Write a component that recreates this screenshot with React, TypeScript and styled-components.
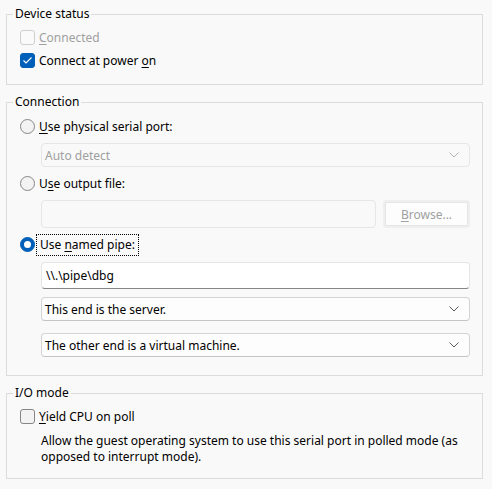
import React from 'react';
import styled, { createGlobalStyle } from 'styled-components';

const Global = createGlobalStyle`
  html, body {
    margin: 0;
    background: #f9f9f9;
  }
  body {
    font-family: "Noto Sans", "Liberation Sans", sans-serif;
    font-size: 12px;
    color: #000;
  }
`;

const Page = styled.div`
  display: flex;
  flex-direction: column;
  gap: 9px;
  padding: 6px 9px 0 6px;
  width: 477px;
`;

const Group = styled.fieldset<{ $pt?: number; $pb?: number }>`
  margin: 0;
  min-width: 0;
  border: 1px solid #dcdcdc;
  padding: ${(p) => p.$pt ?? 4}px 12px ${(p) => p.$pb ?? 12}px 13px;
  display: flex;
  flex-direction: column;
`;

const Legend = styled.legend`
  padding: 0 2px;
  margin-left: -7px;
  line-height: 16px;
  font-size: 12px;
`;

const Row = styled.label<{ $mt?: number; $disabled?: boolean }>`
  display: flex;
  align-items: center;
  gap: 4px;
  height: 23px;
  margin-top: ${(p) => p.$mt ?? 0}px;
  color: ${(p) => (p.$disabled ? '#a0a0a0' : '#000')};
  line-height: 16px;
`;

const Key = styled.span`
  text-decoration: underline;
  text-underline-offset: 2px;
`;

const Focus = styled.span`
  outline: 1px dotted #000;
  outline-offset: 2px;
  padding: 0 1px;
`;

const Box = styled.span<{ $checked?: boolean; $disabled?: boolean }>`
  width: 15px;
  height: 15px;
  box-sizing: border-box;
  border-radius: 3px;
  flex-shrink: 0;
  display: flex;
  align-items: center;
  justify-content: center;
  background: ${(p) => (p.$checked ? '#005fb8' : p.$disabled ? '#fafafa' : '#f3f3f3')};
  border: 1px solid ${(p) => (p.$checked ? '#005fb8' : p.$disabled ? '#cfcfcf' : '#868686')};
`;

const Radio = styled.span<{ $checked?: boolean }>`
  width: 15px;
  height: 15px;
  box-sizing: border-box;
  border-radius: 50%;
  flex-shrink: 0;
  display: flex;
  align-items: center;
  justify-content: center;
  background: ${(p) => (p.$checked ? '#005fb8' : '#f3f3f3')};
  border: 1px solid ${(p) => (p.$checked ? '#005fb8' : '#868686')};
  &::after {
    content: '';
    display: ${(p) => (p.$checked ? 'block' : 'none')};
    width: 7px;
    height: 7px;
    border-radius: 50%;
    background: #fff;
  }
`;

const Indent = styled.div<{ $mt?: number }>`
  margin-left: 21px;
  margin-top: ${(p) => p.$mt ?? 0}px;
  display: flex;
  gap: 7px;
`;

const Combo = styled.div<{ $disabled?: boolean }>`
  flex: 1;
  height: 24px;
  box-sizing: border-box;
  display: flex;
  align-items: center;
  justify-content: space-between;
  padding: 0 10px 0 3px;
  border-radius: 4px;
  border: 1px solid ${(p) => (p.$disabled ? '#e6e6e6' : '#d4d4d4')};
  border-bottom-color: ${(p) => (p.$disabled ? '#e6e6e6' : '#c4c4c4')};
  background: ${(p) => (p.$disabled ? '#f9f9f9' : '#fdfdfd')};
  color: ${(p) => (p.$disabled ? '#a0a0a0' : '#000')};
`;

const Field = styled.div<{ $disabled?: boolean; $h: number }>`
  flex: 1;
  height: ${(p) => p.$h}px;
  box-sizing: border-box;
  display: flex;
  align-items: center;
  padding: 0 4px;
  border-radius: 4px;
  border: 1px solid ${(p) => (p.$disabled ? '#e6e6e6' : '#e5e5e5')};
  border-bottom: 1px solid ${(p) => (p.$disabled ? '#e6e6e6' : '#868686')};
  background: ${(p) => (p.$disabled ? '#f9f9f9' : '#fff')};
`;

const Button = styled.div`
  width: 87px;
  height: 28px;
  box-sizing: border-box;
  border: 2px solid #efefef;
  border-radius: 3px;
  display: flex;
  align-items: center;
  justify-content: center;
  background: #fdfdfd;
  box-shadow: inset 0 0 0 1px #e5e5e5;
  color: #a0a0a0;
`;

const Note = styled.div`
  margin: 5px 0 0 21px;
  line-height: 16px;
`;

const Chevron = ({ color }: { color: string }) => (
  <svg width="10" height="6" viewBox="0 0 10 6">
    <path d="M0.5 0.5 L5 5 L9.5 0.5" fill="none" stroke={color} strokeWidth="1" />
  </svg>
);

const Check = () => (
  <svg width="11" height="9" viewBox="0 0 11 9">
    <path d="M1.5 4.5 L4 7 L9.5 1.5" fill="none" stroke="#fff" strokeWidth="1.1" />
  </svg>
);

const App = () => {
  return (
    <>
      <Global />
      <Page>
        <Group>
          <Legend>Device status</Legend>
          <Row $disabled>
            <Box $disabled />
            <span><Key>C</Key>onnected</span>
          </Row>
          <Row>
            <Box $checked><Check /></Box>
            <span>Connect at power <Key>o</Key>n</span>
          </Row>
        </Group>

        <Group $pt={5} $pb={18}>
          <Legend>Connection</Legend>
          <Row>
            <Radio />
            <span><Key>U</Key>se physical serial port:</span>
          </Row>
          <Indent $mt={5}>
            <Combo $disabled>
              <span>Auto detect</span>
              <Chevron color="#b4b4b4" />
            </Combo>
          </Indent>
          <Row $mt={5}>
            <Radio />
            <span>U<Key>s</Key>e output file:</span>
          </Row>
          <Indent $mt={5}>
            <Field $disabled $h={28} />
            <Button><span><Key>B</Key>rowse...</span></Button>
          </Indent>
          <Row $mt={5}>
            <Radio $checked />
            <Focus>Use <Key>n</Key>amed pipe:</Focus>
          </Row>
          <Indent $mt={6}>
            <Field $h={27}>\\.\pipe\dbg</Field>
          </Indent>
          <Indent $mt={8}>
            <Combo>
              <span>This end is the server.</span>
              <Chevron color="#5c5c5c" />
            </Combo>
          </Indent>
          <Indent $mt={12}>
            <Combo>
              <span>The other end is a virtual machine.</span>
              <Chevron color="#5c5c5c" />
            </Combo>
          </Indent>
        </Group>

        <Group $pb={13}>
          <Legend>I/O mode</Legend>
          <Row>
            <Box />
            <span><Key>Y</Key>ield CPU on poll</span>
          </Row>
          <Note>
            Allow the guest operating system to use this serial port in polled mode (as
            opposed to interrupt mode).
          </Note>
        </Group>
      </Page>
    </>
  );
};

export default App;
